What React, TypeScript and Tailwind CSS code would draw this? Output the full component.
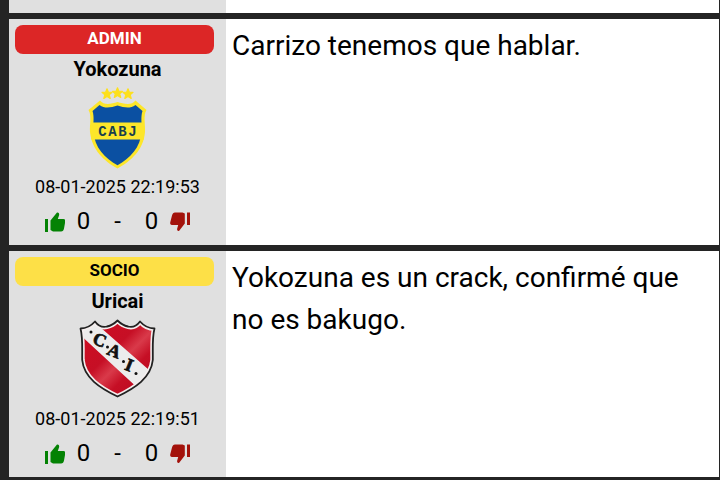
import React from "react";

function BocaCrest() {
  return (
    <svg className="h-21 w-20" viewBox="0 0 80 84" role="img" aria-label="CABJ">
      <g fill="#fde01c" stroke="#fde01c" strokeWidth="1.200" strokeLinejoin="round">
        {[29, 39.5, 50].map((x, i) => (
          <path
            key={x}
            transform={`translate(${x} ${i === 1 ? 7 : 8})`}
            d="M0-5.2 1.4-1.8 5-1.6 2.2.8 3.2 4.4 0 2.4-3.2 4.4-2.2.8-5-1.6-1.4-1.8Z"
          />
        ))}
      </g>
      <path
        d="M22 14.500C26 19.500 33 18 39.500 16C46 18 54 19.500 57.500 14.500L68.500 24C65 30 67.500 38 67 46C65.500 64 53 75 39.500 82.500C26 75 14 64 12 46C11.500 38 14 30 10.500 24Z"
        fill="#fde62a"
      />
      <path
        d="M21.500 19C27 23 33 21.500 39.500 19.500C46 21.500 52 23 57.500 19L64.500 25C62.500 31 64 38 63.700 45C62.500 62 52 72 39.500 79.300C27 72 16.500 62 15.300 45C15 38 16.500 31 14.500 25Z"
        fill="#0b50a2"
      />
      <path d="M13 36.500H66V53.500H13Z" fill="#fde62a" />
      <g
        textAnchor="middle"
        fontFamily="'Liberation Mono', monospace"
        fontWeight="700"
        fontSize="14"
        fill="#173f4d"
      >
        <text x="24.500" y="49.500">C</text>
        <text x="34.500" y="49.500">A</text>
        <text x="44.500" y="49.500">B</text>
        <text x="54.500" y="49.500">J</text>
      </g>
    </svg>
  );
}

function IndependienteCrest() {
  const shield =
    "M17 3.500C21 9 25 9.500 29 8.500C34 7.500 37 5 39.500 2.500C42 5 45 7.500 50 8.500C54 9.500 58 9 62 3.500C66 8 71 10.500 76.500 10.500C74 20 75 30 74.800 42C73 60 57 70 39.500 78.500C22 70 6 60 4.200 42C4 30 5 20 2.500 10.500C8 10.500 13 8 17 3.500Z";
  return (
    <svg className="h-21 w-20" viewBox="0 0 80 84" role="img" aria-label="C.A.I.">
      <defs>
        <linearGradient id="red" gradientUnits="userSpaceOnUse" x1="5" y1="10" x2="70" y2="75">
          <stop offset="0" stopColor="#cf0d22" />
          <stop offset="0.400" stopColor="#c60f25" />
          <stop offset="0.550" stopColor="#d93a4a" />
          <stop offset="0.700" stopColor="#c60f25" />
          <stop offset="1" stopColor="#b50920" />
        </linearGradient>
        <clipPath id="shield">
          <path d={shield} />
        </clipPath>
      </defs>
      <path d={shield} fill="url(#red)" />
      <g clipPath="url(#shield)">
        <path d="M0 0H12L22 9 78 58 64 74 0 15Z" fill="#ececec" />
        <path d={shield} fill="none" stroke="#f4eeee" strokeWidth="5" />
      </g>
      <path d={shield} fill="none" stroke="#222222" strokeWidth="1.800" strokeLinejoin="round" />
      <g
        textAnchor="middle"
        fontFamily="'Liberation Serif', serif"
        fontWeight="700"
        fontSize="18"
        fill="#111111"
        stroke="#111111"
        strokeWidth="0.700"
      >
        <text transform="translate(19.500 27.500) rotate(22)">C</text>
        <text transform="translate(34 38.500) rotate(22)">A</text>
        <text transform="translate(49 52.500) rotate(22)">I</text>
      </g>
      <g fill="#111111">
        <circle cx="13" cy="14" r="1.500" />
        <circle cx="29.500" cy="29" r="1.500" />
        <circle cx="45.500" cy="43.500" r="1.500" />
        <circle cx="58" cy="55.500" r="1.500" />
      </g>
    </svg>
  );
}

function ThumbUp() {
  return (
    <svg className="h-5 w-5" viewBox="0 0 20 20" fill="#048204" aria-hidden="true">
      <path d="M0 7H3V20H0Z" />
      <path d="M5.500 8.500 12 0.500C14 0.200 14.500 2 14 3.500L12.800 7H18.500C20 7 20.500 8 20.300 9.500L19 16.500C18.600 18.500 17.800 19.500 16 19.500H8L5.500 18Z" />
    </svg>
  );
}

function ThumbDown() {
  return (
    <svg className="h-5 w-5" viewBox="0 0 20 20" fill="#a3120b" aria-hidden="true">
      <path d="M17 0.500H20V13H17Z" />
      <path d="M14.800 1.500V11.500L9 19C7.500 19.300 6.800 18 7.200 16.500L8.200 13H2C0.500 13 0 12 0.200 10.500L2 3.500C2.500 1.500 3.500 0.500 5 0.500H12.500Z" />
    </svg>
  );
}

type Post = {
  role: string;
  badge: string;
  author: string;
  crest: React.ReactNode;
  date: string;
  text: string;
};

const posts: Post[] = [
  {
    role: "ADMIN",
    badge: "bg-[#dc2626] text-white",
    author: "Yokozuna",
    crest: <BocaCrest />,
    date: "08-01-2025 22:19:53",
    text: "Carrizo tenemos que hablar.",
  },
  {
    role: "SOCIO",
    badge: "bg-[#fde047] text-black",
    author: "Uricai",
    crest: <IndependienteCrest />,
    date: "08-01-2025 22:19:51",
    text: "Yokozuna es un crack, confirmé que no es bakugo.",
  },
];

function PostRow({ post }: { post: Post }) {
  return (
    <article className="flex bg-white">
      <aside className="flex w-[217px] shrink-0 flex-col items-center bg-[#e0e0e0] pt-1.5 pb-1.5">
        <div className="w-full pr-3 pl-1.5">
          <div className={`h-[29px] rounded-lg text-center text-[17px] leading-[26px] font-bold ${post.badge}`}>
            {post.role}
          </div>
        </div>
        <h2 className="text-xl leading-[30px] font-bold">{post.author}</h2>
        <div className="pt-0.5">{post.crest}</div>
        <time className="text-lg leading-[34px]">{post.date}</time>
        <div className="flex items-center gap-3 text-2xl leading-[35px]">
          <button type="button" aria-label="Me gusta">
            <ThumbUp />
          </button>
          <span>0</span>
          <span className="px-3">-</span>
          <span>0</span>
          <button type="button" aria-label="No me gusta">
            <ThumbDown />
          </button>
        </div>
      </aside>
      <p className="min-w-0 flex-1 px-1.5 pt-1.5 text-[28px] leading-[42px]">{post.text}</p>
    </article>
  );
}

export default function App() {
  return (
    <main className="flex h-screen flex-col gap-1.5 overflow-hidden bg-[#242424] pr-px pl-[9px] font-['Roboto',sans-serif] text-black">
      <div className="flex h-[13px] shrink-0 bg-white">
        <div className="w-[217px] bg-[#e0e0e0]" />
      </div>
      {posts.map((post) => (
        <PostRow key={post.date} post={post} />
      ))}
    </main>
  );
}
